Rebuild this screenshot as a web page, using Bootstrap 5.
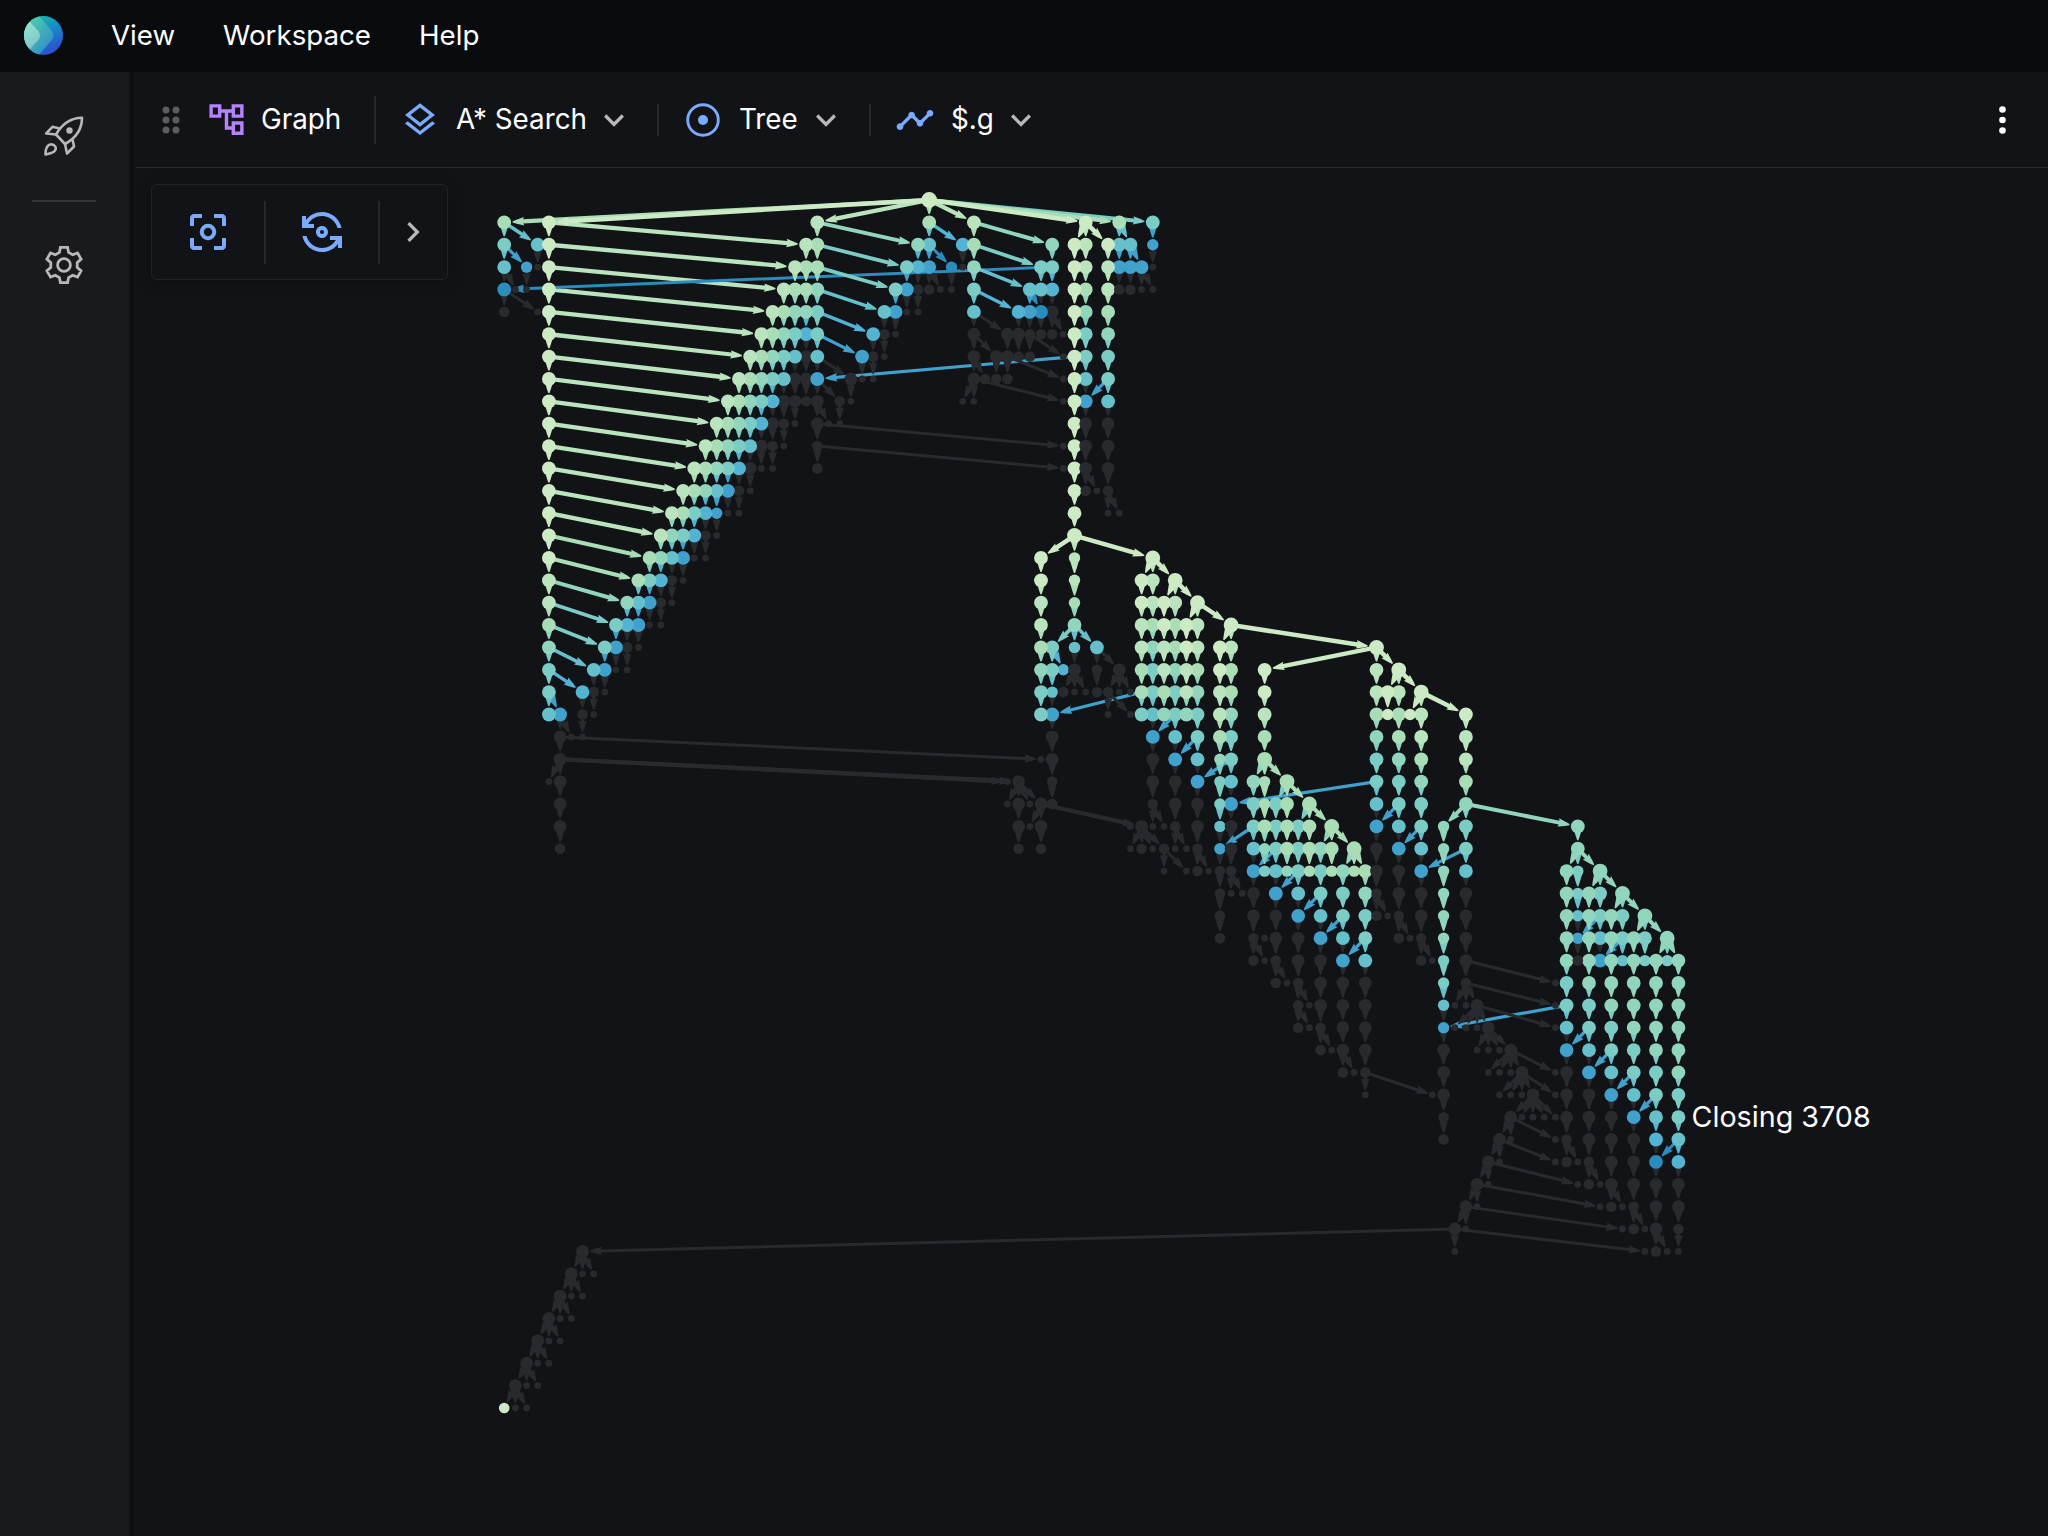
<!DOCTYPE html>
<html lang="en" data-bs-theme="dark">
<head>
<meta charset="utf-8">
<meta name="viewport" content="width=device-width, initial-scale=1">
<title>Graph</title>
<link href="https://cdn.jsdelivr.net/npm/bootstrap@5.3.0/dist/css/bootstrap.min.css" rel="stylesheet">
<style>
html, body { height: 100%; }
body { background: #121317; color: #fff; font-family: Inter, "Liberation Sans", sans-serif; font-size: 27.8px; line-height: 1; overflow: hidden; }
svg { display: block; flex: none; }
.topbar { height: 72px; background: #0a0b0f; padding-left: 24px; padding-bottom: 2px; flex: none; }
.topbar .nav { margin-left: 48px; gap: 48px; }
.topbar .nav-link { color: #fff; padding: 0; line-height: 36px; font-size: 27.7px; }
.rail { width: 128px; background: #191a1d; padding-top: 44px; flex: none; }
.rail-line { width: 64px; height: 2px; background: #333437; margin: 44px 0 43px; }
.rail-gap { width: 8px; background: linear-gradient(90deg, #16171a 0 2px, #0c0d11 2px 5px, #121317 5px); flex: none; }
.toolbar-row { height: 96px; border-bottom: 1.5px solid #2b2c30; flex: none; padding-right: 28px; }
.vline { width: 2px; background: #27282c; flex: none; }
.blue { color: #7aabff; }
.violet { color: #b583ff; }
.gray { color: #b8b8ba; }
.stage svg.plot { position: absolute; inset: 0; }
.float-tools { position: absolute; left: 15px; top: 16px; width: 297px; height: 96px; border: 1.5px solid #232428; border-radius: 6px; background: #121317; box-shadow: 0 2px 14px rgba(0,0,0,.22); }
</style>
<script src="https://cdn.jsdelivr.net/npm/bootstrap@5.3.0/dist/js/bootstrap.bundle.min.js"></script>
</head>
<body class="d-flex flex-column">
<header class="topbar d-flex align-items-center">
  <svg width="39" height="39" viewBox="0 0 39 39">
    <defs>
      <linearGradient id="la" x1="0" y1="0" x2=".5" y2="1"><stop offset="0" stop-color="#17c3a4"/><stop offset=".45" stop-color="#1596c4"/><stop offset="1" stop-color="#2b52cf"/></linearGradient>
      <linearGradient id="lb" x1="0" y1="0" x2="1" y2="1"><stop offset="0" stop-color="#50dfa3"/><stop offset="1" stop-color="#2f7fd2"/></linearGradient>
      <linearGradient id="lc" x1="0" y1="0" x2=".4" y2="1"><stop offset="0" stop-color="#9ae8cb"/><stop offset="1" stop-color="#7cc5cb"/></linearGradient>
      <clipPath id="lk"><circle cx="19.5" cy="19.5" r="19.5"/></clipPath>
    </defs>
    <g clip-path="url(#lk)">
      <rect width="39" height="39" fill="url(#la)"/>
      <path d="M-2 0H15L28 15Q31 19.500 28 23.500L14 40H-2Z" fill="url(#lb)"/>
      <path d="M-2 4H4L14 14.500Q18 19.500 14 24.500L3 36H-2Z" fill="url(#lc)"/>
    </g>
  </svg>
  <nav class="nav">
    <a class="nav-link" href="#">View</a>
    <a class="nav-link" href="#">Workspace</a>
    <a class="nav-link" href="#">Help</a>
  </nav>
</header>
<div class="d-flex flex-grow-1">
  <aside class="rail d-flex flex-column align-items-center gray">
    <svg width="40" height="40" viewBox="14.500 15.500 40 40" fill="none" stroke="currentColor" stroke-width="2.600" stroke-linejoin="round">
      <path d="M52.500 17.300C41 17.500 32.500 23.500 26.500 34L35.500 43.500C46.500 37.500 52.500 29 52.500 17.300Z"/>
      <path d="M30 28 23 26.300 16.700 33 26.500 34M43 39 44.500 46 37.500 53 35.500 43.500"/>
      <path d="M16 54C16 48 17.500 44 21.500 43.700C25.500 43.800 27.300 47.300 25.500 50C23.500 52.800 20 53 16 54Z"/>
      <circle cx="40" cy="30" r="3.200" fill="currentColor" stroke="none"/>
    </svg>
    <div class="rail-line"></div>
    <svg width="40" height="40" viewBox="-20 -20 40 40" fill="none" stroke="currentColor" stroke-width="2.800">
      <path d="M-3.600-17.600H3.600L4.600-12.600 8.700-10.300 13.500-12.100 17.100-5.900 13.200-2.400V2.400L17.100 5.900 13.500 12.100 8.700 10.300 4.600 12.600 3.600 17.600H-3.600L-4.600 12.600-8.700 10.300-13.500 12.100-17.100 5.900-13.200 2.400V-2.400L-17.100-5.900-13.500-12.100-8.700-10.300-4.600-12.600Z"/>
      <circle r="6.400"/>
    </svg>
  </aside>
  <div class="rail-gap"></div>
  <main class="flex-grow-1 d-flex flex-column">
    <div class="toolbar-row d-flex align-items-center">
      <svg width="18" height="28" viewBox="0 0 18 28" fill="#5c5d61" style="margin-left:26px"><circle cx="4" cy="4" r="3.500"/><circle cx="14" cy="4" r="3.500"/><circle cx="4" cy="14" r="3.500"/><circle cx="14" cy="14" r="3.500"/><circle cx="4" cy="24" r="3.500"/><circle cx="14" cy="24" r="3.500"/></svg>
      <svg class="violet" width="41" height="41" viewBox="0 0 24 24" fill="currentColor" style="margin-left:26px"><path d="M22 11V3h-7v3H9V3H2v8h7V8h2v10h4v3h7v-8h-7v3h-2V8h2v3h7zM7 9H4V5h3v4zm10 6h3v4h-3v-4zm0-10h3v4h-3V5z"/></svg>
      <span style="margin-left:14px;width:81px">Graph</span>
      <span class="vline" style="height:48px;margin-left:32px"></span>
      <svg class="blue" width="40" height="40" viewBox="0 0 24 24" fill="currentColor" style="margin-left:24px"><path d="M12 18.540l-7.370-5.730L3 14.070l9 7 9-7-1.630-1.270zM12 16l7.360-5.730L21 9l-9-7-9 7 1.630 1.270L12 16zm0-11.470L17.740 9 12 13.470 6.260 9 12 4.530z"/></svg>
      <span class="text-nowrap" style="margin-left:16px;width:130px">A* Search</span>
      <svg class="gray" width="40" height="40" viewBox="0 0 24 24" fill="currentColor" style="margin-left:8px"><path d="M16.590 8.590 12 13.170 7.410 8.590 6 10l6 6 6-6z"/></svg>
      <span class="vline" style="height:32px;margin-left:23px"></span>
      <svg class="blue" width="34" height="34" viewBox="0 0 34 34" style="margin-left:27px"><circle cx="17" cy="17" r="15.300" fill="none" stroke="currentColor" stroke-width="2.900"/><circle cx="17" cy="17" r="5" fill="currentColor"/></svg>
      <span style="margin-left:19px;width:59px">Tree</span>
      <svg class="gray" width="40" height="40" viewBox="0 0 24 24" fill="currentColor" style="margin-left:8px"><path d="M16.590 8.590 12 13.170 7.410 8.590 6 10l6 6 6-6z"/></svg>
      <span class="vline" style="height:32px;margin-left:23px"></span>
      <svg class="blue" width="40" height="40" viewBox="0 0 24 24" fill="currentColor" style="margin-left:24px"><path d="M23 8c0 1.100-.9 2-2 2-.18 0-.35-.02-.51-.07l-3.560 3.550c.05.160.07.340.07.520 0 1.100-.9 2-2 2s-2-.9-2-2c0-.18.020-.36.070-.52l-2.550-2.550c-.16.050-.34.070-.52.070s-.36-.02-.52-.07l-4.550 4.560c.05.160.07.330.07.510 0 1.100-.9 2-2 2s-2-.9-2-2 .9-2 2-2c.18 0 .35.020.51.070l4.560-4.550C8.020 9.360 8 9.180 8 9c0-1.100.9-2 2-2s2 .9 2 2c0 .18-.02.360-.07.520l2.550 2.550c.16-.05.340-.07.520-.07s.36.020.52.070l3.550-3.560C19.020 8.350 19 8.180 19 8c0-1.100.9-2 2-2s2 .9 2 2z"/></svg>
      <span style="margin-left:16px;width:43px">$.g</span>
      <svg class="gray" width="40" height="40" viewBox="0 0 24 24" fill="currentColor" style="margin-left:7px"><path d="M16.590 8.590 12 13.170 7.410 8.590 6 10l6 6 6-6z"/></svg>
      <svg class="ms-auto" width="34" height="30" viewBox="0 0 34 30" fill="#fff"><circle cx="16.500" cy="4.500" r="3.300"/><circle cx="16.500" cy="15" r="3.300"/><circle cx="16.500" cy="25.500" r="3.300"/></svg>
    </div>
    <section class="stage position-relative flex-grow-1">
      <svg class="plot" id="plot" width="1912" height="1368" viewBox="136 168 1912 1368"></svg>
      <div class="float-tools d-flex align-items-center">
        <svg class="blue" width="48" height="48" viewBox="0 0 24 24" fill="currentColor" style="margin-left:31.500px"><path d="M5 15H3v4c0 1.100.9 2 2 2h4v-2H5v-4zM5 5h4V3H5c-1.100 0-2 .9-2 2v4h2V5zm14-2h-4v2h4v4h2V5c0-1.100-.9-2-2-2zm0 16h-4v2h4c1.100 0 2-.9 2-2v-4h-2v4z"/><circle cx="12" cy="12" r="3.100" fill="none" stroke="currentColor" stroke-width="2"/></svg>
        <span class="vline" style="height:63px;margin-left:32px"></span>
        <svg class="blue" width="48" height="48" viewBox="0 0 24 24" fill="currentColor" style="margin-left:32px"><path d="M9 12c0 1.660 1.340 3 3 3s3-1.340 3-3-1.340-3-3-3-3 1.340-3 3zm4 0c0 .55-.45 1-1 1s-1-.45-1-1 .45-1 1-1 1 .45 1 1z"/><path d="M8 10V8H5.090C6.470 5.610 9.050 4 12 4c3.720 0 6.850 2.560 7.740 6h2.060c-.93-4.560-4.960-8-9.800-8-3.270 0-6.180 1.580-8 4.010V4H2v6h6zM16 14v2h2.910c-1.380 2.390-3.960 4-6.910 4-3.720 0-6.850-2.560-7.740-6H2.200c.93 4.560 4.960 8 9.800 8 3.270 0 6.180-1.580 8-4.010V20h2v-6h-6z"/></svg>
        <span class="vline" style="height:63px;margin-left:32px"></span>
        <svg class="gray" width="40" height="40" viewBox="0 0 24 24" fill="currentColor" style="margin-left:13px"><path d="M10 6 8.590 7.410 13.170 12l-4.580 4.590L10 18l6-6z"/></svg>
      </div>
    </section>
  </main>
</div>
<script>
/* One line per tree depth. "column:codes" places one node per column from that column on.
   0-8 = colour level, A-I = the same levels drawn smaller, z/y/x = unexplored large/medium/small, . = gap */
const rows = `38:0
0:2 4:0 28:1 38:2 42:1 52:0 55:2 58:4
0:4 3:5 4:0 27:12 37:35 41:6 42:2 49:3 51:01 54:055 58:H
0:5 2:H 3:x 4:0 26:122 36:467 40:Ix 42:3 48:44 51:01 54:1777x
0:8 1:xx 4:0 25:1223 35:47yyxx 42:4 47:556 51:02 54:1yyxx
0:y 3:x 4:0 24:12334 34:57xx 42:5 46:678z 51:03 54:2
4:0 23:123464 33:6yx 42:z 45:zzyyyx 51:04 54:3
4:0 22:12345z5 32:7yx 42:z 44:zzyy 50:x04 54:4
4:0 21:12345zz7 31:zxx 42:zyyy 50:x05 54:4
4:0 20:12346zzyz 30:yx 41:xx 50:x07 54:5
4:0 19:12346zyx 28:zxx 51:0z 54:z
4:0 18:12345zyx 28:y 50:x0z 54:z
4:0 17:12346zxx 28:y 50:x0z 54:z
4:0 16:12357yx 51:0yx 54:y
4:0 15:1246Hxx 51:0 54:xx
4:0 14:1346yx 51:0
4:0 13:2357xx 48:0 51:B 58:0
4:1 12:246yx 48:0 51:B 57:01 60:0
4:1 11:357yx 48:1 51:C 57:0101 62:0
4:2 10:467xx 48:1 51:3 57:120201 65:0
4:3 9:47yx 48:24 51:F 53:5 57:131201 64:01 78:0
4:4 8:57xx 48:34Gz 53:y 55:z 57:241312 64:02 68:0 78:1 80:0
4:4 7:6yx 48:4Fyxxyyxx 57:242413 64:12 68:0 78:101 82:0
4:57 7:yx 48:47 54:x 56:x453434 64:13 68:1 78:2A2A1 86:0
5:zxx 49:z 58:7 60:5 62:4 64:24 68:2 78:3 80:2 82:1 86:1
5:z 48:xz 58:z 60:7 62:5 64:D4 68:2 78:4 80:3 82:2 86:1
4:xz 45:xz 49:y 58:z 60:z 62:7 64:E5 67:3C 70:2 78:4 80:4 82:3 86:2
5:z 45:xzxzy 58:y 60:z 62:z 64:E7 67:4C42 72:2 78:5 80:4 82:4 86:3
5:z 46:zxz 56:xzxxy 62:z 64:Fz 67:424242 74:2 78:7 80:5 82:4 84:D 86:4 96:3
5:y 46:y 48:y 56:xyxyxxy 64:Hz 67:5D424232 76:2 78:z 80:7 82:5 84:D 86:4 96:3
59:x 61:xyxyy 67:7E5D4C4C3C2 78:z 80:z 82:7 84:D 86:5 95:3E 98:3
64:yxxz 69:7 71:5 73:4 75:4 77:3 78:y 80:z 82:z 84:D 86:z 95:3E34 100:3
64:y 67:z 69:z 71:7 73:5 75:4 77:4 78:yxy 82:z 84:D 86:z 95:3F3434 102:3
64:y 67:yxz 71:z 73:7 75:5 77:4 80:yxy 84:D 86:z 95:3H353434 104:3
67:yxy 71:z 73:z 75:7 77:5 82:yx 84:E 86:z 95:3y373F3E3E3
69:yxy 73:z 75:z 77:z 84:E 86:y 94:x4 97:3 99:3 101:3 103:3 105:3
71:yxz 75:z 77:z 84:Fxxz 94:x4 97:4 99:3 101:3 103:3 105:3
71:yxy 75:z 77:z 84:Hxxxz 94:x5 97:4 99:4 101:3 103:3 105:3
73:yxz 77:z 84:z 87:xxxz 95:7 97:5 99:4 101:4 103:3 105:3
75:yxy 84:z 88:xxxz 94:xz 97:7 99:5 101:4 103:4 105:3
77:x 83:xz 89:xxxz 94:xz 97:z 99:7 101:5 103:4 105:4
84:y 90:zxxxxz 97:z 99:z 101:7 103:5 105:4
84:y 89:zx 94:xy 97:z 99:z 101:z 103:6 105:5
88:zx 94:xyxy 99:z 101:z 103:8 105:6
87:zx 96:xyxz 101:z 103:z 105:z
86:zx 98:xyxy 103:z 105:z
85:zx 100:xyxz 105:y
7:z 85:x 102:xyxx
6:zxx
5:zxx
4:zxx
3:zxx
2:zxx
1:zxx
0:Axx`.split("\n");
/* Slanted links: "parentColumn,parentRow>childColumn,childRow"; a third target value of z keeps the link unexplored */
const links = `38,0>0,1 38,0>4,1 38,0>28,1 38,0>42,1 38,0>58,1 38,0>55,1 38,0>52,1 0,1>3,2 0,2>2,3 0,3>1,4 0,4>3,5 49,3>0,4 4,22>5,23 5,23>6,24 5,25>4,26
5,24>48,25 5,25>45,26 5,25>46,26 28,1>37,2 28,2>36,3 28,3>35,4 28,4>34,5 28,5>33,6 28,6>32,7 28,7>31,8 28,8>30,9 28,9>29,10 28,10>50,11 28,11>50,12 38,1>41,2 38,2>40,3 38,3>39,4
42,1>49,2 42,2>48,3 42,3>47,4 42,4>46,5 42,5>45,6 42,6>44,7 42,7>43,8 42,8>41,9 42,8>50,9 49,5>50,6 47,6>50,7 45,7>50,8 47,4>48,5 51,7>28,8
52,1>51,2 52,1>54,2 55,1>56,2 56,2>57,3 57,3>58,4 54,8>52,9 52,12>53,13 54,13>55,14
51,15>48,16 51,15>58,16 58,16>57,17 58,16>60,17 60,17>59,18 60,17>62,18 62,18>61,19 62,18>65,19 65,19>64,20 65,19>78,20 78,20>68,21 78,20>80,21 80,21>79,22 80,21>82,22 82,22>81,23 82,22>86,23
51,19>49,20 51,19>53,20 49,20>50,21 53,20>55,21 51,21>50,22 51,21>52,22 55,21>54,22 55,21>56,22 54,22>56,23 57,22>49,23 60,23>58,24 62,24>60,25 65,25>62,26 78,26>65,27 67,28>64,29 69,29>67,30 71,30>69,31 73,31>71,32 75,32>73,33 77,33>75,34
80,27>78,28 82,28>80,29 86,29>82,30 98,32>96,33 100,33>98,34 95,36>84,37 97,37>95,38 99,38>97,39 101,39>99,40 103,40>101,41 105,42>103,43
68,25>67,26 68,25>70,26 70,26>69,27 70,26>72,27 72,27>71,28 72,27>74,28 74,28>73,29 74,28>76,29 76,29>75,30 76,29>77,30
57,28>56,29 57,28>58,29 57,28>59,29 58,27>59,28 60,28>61,29 59,29>61,30 62,29>63,30 65,30>66,31 78,31>79,32 80,32>81,33 82,33>83,34 67,33>68,34 69,34>70,35 71,35>72,36 71,36>72,37 73,37>74,38 75,38>76,39 77,39>83,40
46,26>45,27 46,26>47,27 46,26>48,27 48,27>47,28 48,27>57,28 86,27>84,28 86,27>96,28 96,29>95,30 96,29>98,30 98,30>97,31 98,30>100,31 100,31>99,32 100,31>102,32 102,32>101,33 102,32>104,33 104,33>103,34 104,33>105,34
86,34>94,35 86,35>94,36 86,35>85,36 86,35>87,36 87,36>94,37 87,36>85,37 87,36>86,37 87,36>88,37 88,37>87,38 88,37>89,38 88,37>90,38 90,38>88,39 90,38>89,39 90,38>91,39 90,38>94,39 91,39>89,40 91,39>90,40 91,39>92,40 91,39>94,40 92,40>90,41 92,40>91,41 92,40>93,41 92,40>94,41
90,41>89,42 90,41>94,42 89,42>88,43 89,42>94,43 88,43>87,44 88,43>96,44 87,44>86,45 87,44>98,45 86,45>85,46 86,45>100,46 85,46>102,47 85,46>7,47
95,42>96,43 97,43>98,44 99,44>100,45 101,45>102,46 103,46>104,47
7,47>6,48 7,47>8,48 6,48>5,49 6,48>7,49 5,49>4,50 5,49>6,50 4,50>3,51 4,50>5,51 3,51>2,52 3,51>4,52 2,52>1,53 2,52>3,53 1,53>0,54,z 1,53>2,54`.split(/\s+/);
/* The long left column branches once per depth to the receding band */
for (let r = 1; r <= 21; r++) links.push(`4,${r}>${28 - r},${r + 1}`);
const ramp = ["#ccebc5","#bae4bd","#a8ddb5","#91d5bd","#7bccc4","#65c0cc","#52b3d3","#40a1cc","#2b8cbe"], dim = "#292a2e";
const X = c => 504.2 + 11.183 * c, Y = r => 200 + 22.37 * r;
const nodes = new Map();
rows.forEach((line, r) => line.split(" ").forEach(seg => {
  const [c0, codes] = seg.split(":");
  [...codes].forEach((k, i) => {
    if (k === ".") return;
    const c = +c0 + i, up = "ABCDEFGHI".indexOf(k), dark = "xyz".includes(k);
    const level = dark ? -1 : up >= 0 ? up : +k;
    const size = dark ? { x: 3.4, y: 5.3, z: 6.4 }[k] : up >= 0 ? 5.7 : 6.9;
    nodes.set(c + "," + r, { c, r, k, level, size, col: dark ? dim : ramp[level] });
  });
}));
const big = ["51,15","58,16","60,17","62,18","65,19","78,20","80,21","82,22","68,25","70,26","72,27","74,28","76,29","98,30","100,31","102,32","104,33"];
big.forEach(k => nodes.get(k).size = 7.4);
nodes.get("38,0").size = 7.9; nodes.get("0,54").size = 5.3;
const edges = [], slanted = new Set();
links.forEach(l => {
  const [p, q] = l.split(">"), [c, r, flag] = q.split(",");
  const a = nodes.get(p), b = nodes.get(c + "," + r);
  if (!a || !b) return;
  slanted.add(c + "," + r);
  edges.push({ a, b, col: flag ? dim : b.col, lv: flag ? -1 : b.level });
});
nodes.forEach(b => {
  const a = nodes.get(b.c + "," + (b.r - 1));
  if (!a || a.k === "x" || (b.level < 0 && slanted.has(b.c + "," + b.r))) return;
  const dark = b.level >= 0 && slanted.has(b.c + "," + b.r);
  edges.push({ a, b, col: dark ? dim : b.col, lv: dark ? -1 : b.level });
});
function arrow(e) {
  const x1 = X(e.a.c), y1 = Y(e.a.r), x2 = X(e.b.c), y2 = Y(e.b.r);
  const d = Math.hypot(x2 - x1, y2 - y1), ux = (x2 - x1) / d, uy = (y2 - y1) / d;
  const tip = d - e.b.size - 1.5, head = Math.min(12.5, tip), back = tip - head;
  let w = e.lv < 0 ? 1.5 : 2.25 - e.lv * .09;
  if (["45,26","46,26","57,28"].includes(e.b.c + "," + e.b.r)) w = 2.1;
  const P = (t, s) => (x1 + ux * t - uy * s).toFixed(1) + "," + (y1 + uy * t + ux * s).toFixed(1);
  return `<polygon fill="${e.col}" points="${P(0,-w)} ${P(back+2,-w)} ${P(back+1,-4.2)} ${P(tip-4,-2)} ${P(tip,-.6)} ${P(tip,.6)} ${P(tip-4,2)} ${P(back+1,4.2)} ${P(back+2,w)} ${P(0,w)}"/>`;
}
const far = e => e.lv >= 7 && Math.abs(e.a.c - e.b.c) > 5;
const rank = e => e.a.c === 4 && e.b.c > 5 ? -1 : far(e) ? 0 : e.lv < 0 ? 1 : e.a.r === 0 ? 2 + (8 - e.lv) / 10 : 4 + (8 - e.lv) / 10;
edges.sort((p, q) => rank(p) - rank(q));
const order = n => n.level < 0 ? (n.c >= 50 ? 2 : 0) : 1;
const dots = [...nodes.values()].sort((p, q) => order(p) - order(q) || q.level - p.level);
document.getElementById("plot").innerHTML =
  edges.map(arrow).join("") +
  dots.map(n => `<circle cx="${X(n.c).toFixed(1)}" cy="${Y(n.r).toFixed(1)}" r="${n.size}" fill="${n.col}"/>`).join("") +
  `<text x="1691.5" y="1127" fill="#fff" font-family="Inter, sans-serif" font-size="28.700">Closing 3708</text>`;
</script>
</body>
</html>
